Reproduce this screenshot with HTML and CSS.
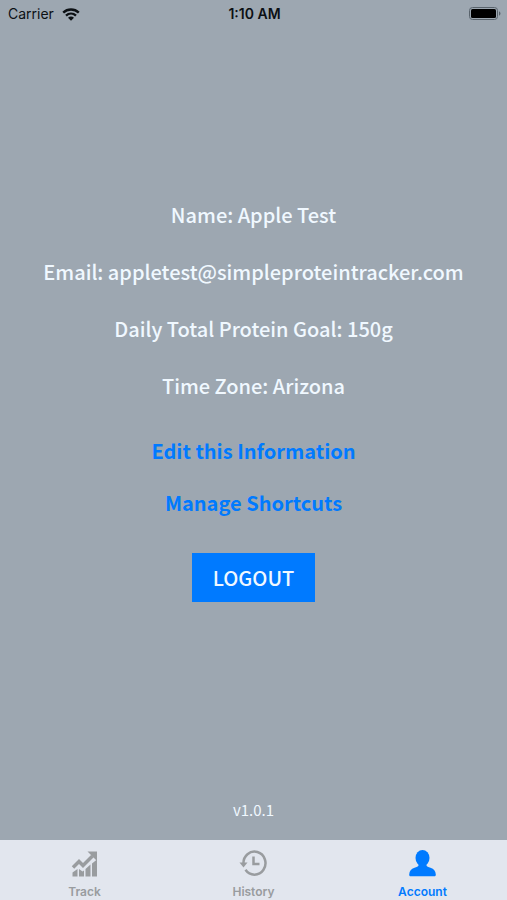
FILE: index.html
```html
<!DOCTYPE html>
<html lang="en">
<head>
<meta charset="utf-8">
<meta name="viewport" content="width=device-width, initial-scale=1">
<title>Account</title>
<link rel="stylesheet" href="styles.css">
</head>
<body>
<header class="status">
  <div class="carrier">
    <span>Carrier</span>
    <svg class="wifi" viewBox="0 0 18 13" aria-hidden="true">
      <path d="M1.2 4.6C5.6.5 12.4.5 16.8 4.6M4 7.6c2.9-2.6 7.1-2.6 10 0" fill="none" stroke="currentColor" stroke-width="2.4"/>
      <path d="M6 9.7c1.8-1.5 4.2-1.5 6 0L9 12.7z" fill="currentColor"/>
    </svg>
  </div>
  <time class="clock">1:10 AM</time>
  <svg class="battery" viewBox="0 0 32 14" aria-hidden="true">
    <rect x=".5" y=".5" width="28" height="12" rx="3" fill="none" stroke="#59636c"/>
    <rect x="2" y="2" width="25" height="9" rx="1.5" fill="#000"/>
    <path d="M30 4.3c2 .8 2 3.600 0 4.400z" fill="#59636c"/>
  </svg>
</header>
<main class="account">
  <p class="detail">Name: Apple Test</p>
  <p class="detail">Email: appletest@simpleproteintracker.com</p>
  <p class="detail">Daily Total Protein Goal: 150g</p>
  <p class="detail">Time Zone: Arizona</p>
  <nav class="links">
    <a href="#edit">Edit this Information</a>
    <a href="#shortcuts">Manage Shortcuts</a>
  </nav>
  <button class="logout" type="button">LOGOUT</button>
</main>
<p class="version">v1.0.1</p>
<nav class="tabs">
  <a class="tab" href="#track">
    <svg viewBox="0 0 28 28" aria-hidden="true">
      <path d="M1.500 23.500l5-3.500v7.500h-5zM8 20l3.500 2.500 1.500-1v6H8zM14.500 20l5-4.500v12h-5zM21 14.500l5-4v17h-5z" fill="currentColor"/>
      <path d="M2 18.500l6-6 4 4L21.500 7" fill="none" stroke="currentColor" stroke-width="3.500"/>
      <path d="M16.500 2.500H26V12z" fill="currentColor"/>
    </svg>
    <span>Track</span>
  </a>
  <a class="tab" href="#history">
    <svg viewBox="0 0 28 28" aria-hidden="true">
      <path d="M3.500 15A11 11.500 0 1 1 5.500 20.800" fill="none" stroke="currentColor" stroke-width="2.500"/>
      <path d="M-.5 13.500h8l-4 5z" fill="currentColor"/>
      <path d="M13.500 7.500V15h6" fill="none" stroke="currentColor" stroke-width="2.500"/>
    </svg>
    <span>History</span>
  </a>
  <a class="tab active" href="#account" aria-current="page">
    <svg viewBox="0 0 28 28" aria-hidden="true">
      <ellipse cx="13.500" cy="9" rx="7" ry="8" fill="currentColor"/>
      <path d="M9.500 14h8v2.500c.5 1.300 1.700 1.400 4 2.200 3.500 1.100 5 3 5.300 6.800.1 1.200-.4 1.800-1.500 1.800H1.700C.6 27.300.1 26.700.2 25.500.500 21.700 2 19.800 5.500 18.700c2.300-.8 3.500-.9 4-2.200z" fill="currentColor"/>
    </svg>
    <span>Account</span>
  </a>
</nav>
</body>
</html>
```
FILE: styles.css
```css
* {
  box-sizing: border-box;
}

body {
  margin: 0;
  min-height: 100vh;
  display: flex;
  flex-direction: column;
  background: #9da7b1;
  color: #f0f8ff;
  font-family: "Noto Sans CJK JP", "Noto Sans", sans-serif;
}

p {
  margin: 0;
}

a {
  color: inherit;
  text-decoration: none;
}

.status {
  height: 28px;
  padding: 0 6px 0 8px;
  display: grid;
  grid-template-columns: 1fr auto 1fr;
  align-items: center;
  color: #0c1014;
  font: 14px/28px Inter, sans-serif;
}

.carrier {
  display: flex;
  align-items: center;
  gap: 8px;
}

.wifi {
  width: 18px;
  height: 13px;
}

.clock {
  font-weight: 600;
}

.battery {
  width: 32px;
  height: 14px;
  justify-self: end;
}

.account {
  flex: 1;
  padding-bottom: 24px;
  display: flex;
  flex-direction: column;
  align-items: center;
  justify-content: center;
  gap: 27px;
  text-align: center;
  font-size: 20px;
  line-height: 30px;
}

.detail {
  font-weight: 500;
}

.links {
  padding: 8px 0;
  display: flex;
  flex-direction: column;
  gap: 22px;
  color: #007aff;
  font-weight: 700;
}

.logout {
  padding: 10px 21px 9px;
  border: 0;
  background: #007aff;
  color: #f0f8ff;
  font: inherit;
  font-weight: 500;
}

.version {
  padding-bottom: 18px;
  font-size: 15px;
  line-height: 24px;
  text-align: center;
}

.tabs {
  height: 60px;
  display: grid;
  grid-template-columns: repeat(3, 1fr);
  background: #e2e6ee;
  color: #999c9f;
}

.tab {
  padding-top: 9px;
  display: flex;
  flex-direction: column;
  align-items: center;
  gap: 7px;
  font: 600 12px/16px Inter, sans-serif;
}

.tab svg {
  width: 28px;
  height: 28px;
  overflow: visible;
}

.active {
  color: #007aff;
}
```
